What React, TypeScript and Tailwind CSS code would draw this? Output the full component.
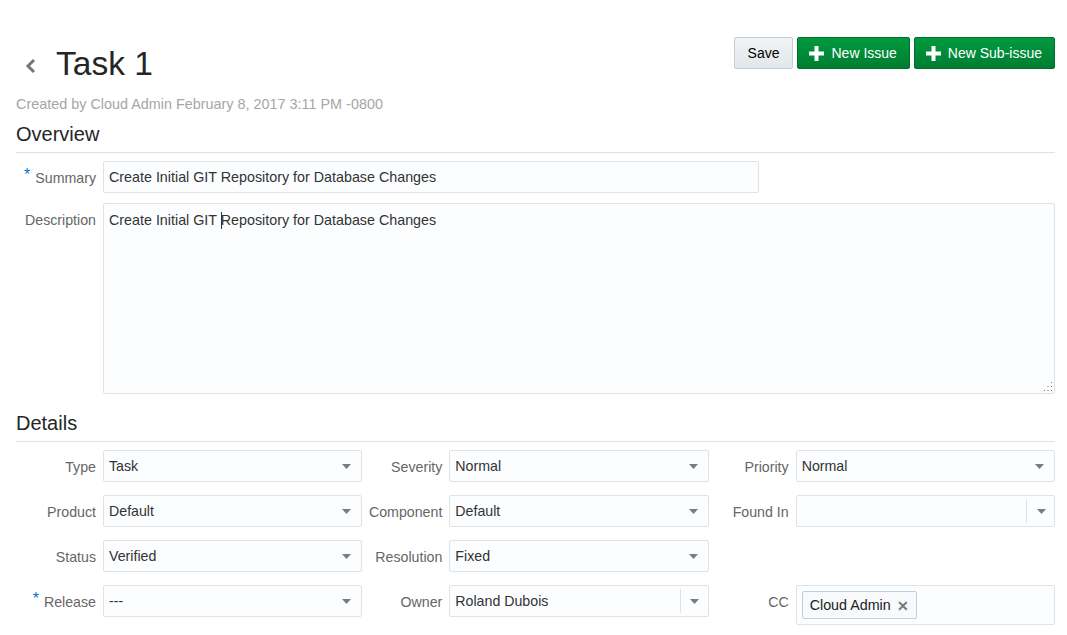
import React from "react";

const Arrow = () => (
  <svg width="9" height="5" viewBox="0 0 9 5" className="shrink-0">
    <path d="M0 0 L9 0 L4.5 5 Z" fill="#7b7b7b" />
  </svg>
);

function Select({ value, divider }: { value: string; divider?: boolean }) {
  return (
    <div className="flex-1 h-[32px] flex items-center border border-[#dde3e7] bg-[#fcfdfe] rounded-[2px]">
      <div className="flex-1 pl-[5px] text-[14.2px] text-[#333] leading-[20px] -mt-[1px]">{value}</div>
      {divider ? (
        <div className="flex items-center h-full">
          <div className="w-px h-[24px] bg-[#dde3e7]" />
          <div className="w-[27px] flex justify-center pl-[1px]">
            <Arrow />
          </div>
        </div>
      ) : (
        <div className="pr-[10px]">
          <Arrow />
        </div>
      )}
    </div>
  );
}

function Label({ text, req }: { text: string; req?: boolean }) {
  return (
    <div className="w-[80px] shrink-0 h-[32px] pt-[1px] leading-[32px] text-right text-[14.2px] text-[#666] whitespace-nowrap">
      {req && <span className="text-[#0572ce] text-[16px] relative -top-[3px] mr-[5px]">*</span>}
      {text}
    </div>
  );
}

function Field({ label, value, req, divider }: { label: string; value: string; req?: boolean; divider?: boolean }) {
  return (
    <div className="flex items-start gap-[7px]">
      <Label text={label} req={req} />
      <Select value={value} divider={divider} />
    </div>
  );
}

const Plus = () => (
  <svg width="15" height="15" viewBox="0 0 15 15" className="shrink-0">
    <rect x="5.5" y="0" width="4" height="15" fill="#fff" />
    <rect x="0" y="5.5" width="15" height="4" fill="#fff" />
  </svg>
);

export default function App() {
  return (
    <div className="min-h-screen bg-white pl-[16px] pr-[12px] font-['Liberation_Sans',Arial,sans-serif]">
      <div className="flex justify-between items-start pt-[37px]">
        <div className="mt-[8px] flex items-center h-[38px]">
          <svg width="12" height="16" viewBox="0 0 12 16" className="ml-[9px] mr-[19px] mt-[3px]">
            <path d="M9 2 L3 8 L9 14" stroke="#777" strokeWidth="3" fill="none" />
          </svg>
          <h1 className="text-[33.5px] leading-[38px] text-[#252525]">Task 1</h1>
        </div>
        <div className="flex gap-[4px]">
          <button className="h-[32px] px-[13px] text-[14px] text-[#000] border border-[#c4ced7] rounded-[2px] bg-gradient-to-b from-[#f2f4f5] to-[#e3e7ea]">
            Save
          </button>
          <button className="h-[32px] pl-[11px] pr-[12px] flex items-center gap-[7px] text-[14px] text-white border border-[#006f2e] rounded-[2px] bg-gradient-to-b from-[#009a3f] to-[#007d32]">
            <Plus />
            New Issue
          </button>
          <button className="h-[32px] pl-[11px] pr-[12px] flex items-center gap-[7px] text-[14px] text-white border border-[#006f2e] rounded-[2px] bg-gradient-to-b from-[#009a3f] to-[#007d32]">
            <Plus />
            New Sub-issue
          </button>
        </div>
      </div>
      <div className="mt-[11px] text-[14.4px] leading-[20px] text-[#a6a6a6]">
        Created by Cloud Admin February 8, 2017 3:11 PM -0800
      </div>
      <div className="mt-[6px] text-[20px] leading-[28px] text-[#252525] pb-[4px] border-b border-[#dfe1e2]">Overview</div>

      <div className="mt-[8px] flex items-start gap-[7px]">
        <Label text="Summary" req />
        <div className="w-[656px] h-[32px] flex items-center border border-[#dde3e7] bg-[#fcfdfe] rounded-[2px] pl-[5px] pt-[1px] text-[14.3px] text-[#333]">
          Create Initial GIT Repository for Database Changes
        </div>
      </div>
      <div className="mt-[10px] flex items-start gap-[7px]">
        <Label text="Description" />
        <div className="relative flex-1 h-[191px] border border-[#dde3e7] bg-[#fcfdfe] rounded-[2px] pl-[5px] pt-[6px] text-[14.3px] leading-[20px] text-[#333]">
          {"Create Initial GIT "}
          <span className="inline-block w-px h-[17px] bg-[#333] align-[-4px] -mr-px"></span>
          {"Repository for Database Changes"}
          <svg width="12" height="12" viewBox="0 0 12 12" className="absolute right-[1px] bottom-[1px]">
            <rect x="10" y="2" width="1" height="1" fill="#777" />
            <rect x="6.5" y="6" width="1" height="1" fill="#777" />
            <rect x="10" y="6" width="1" height="1" fill="#777" />
            <rect x="3" y="10" width="1" height="1" fill="#777" />
            <rect x="6.5" y="10" width="1" height="1" fill="#777" />
            <rect x="10" y="10" width="1" height="1" fill="#777" />
          </svg>
        </div>
      </div>

      <div className="mt-[15px] text-[20px] leading-[28px] text-[#252525] pb-[4px] border-b border-[#dfe1e2]">Details</div>

      <div className="mt-[8px] grid grid-cols-3 gap-y-[13px]">
        <Field label="Type" value="Task" />
        <Field label="Severity" value="Normal" />
        <Field label="Priority" value="Normal" />
        <Field label="Product" value="Default" />
        <Field label="Component" value="Default" />
        <Field label="Found In" value="" divider />
        <Field label="Status" value="Verified" />
        <Field label="Resolution" value="Fixed" />
        <div />
        <Field label="Release" value="---" req />
        <Field label="Owner" value="Roland Dubois" divider />
        <div className="flex items-start gap-[7px]">
          <Label text="CC" />
          <div className="flex-1 h-[40px] border border-[#dde3e7] bg-[#fcfdfe] rounded-[2px] pl-[5px] pt-[5px]">
            <div className="inline-flex items-center h-[28px] pt-[2px] border border-[#c4ced7] bg-[#f7f9fa] rounded-[2px] pl-[7px] pr-[7px] text-[14.3px] text-[#222]">
              Cloud Admin
              <span className="ml-[6px] text-[#777] text-[14px] font-bold leading-none">✕</span>
            </div>
          </div>
        </div>
      </div>
    </div>
  );
}
